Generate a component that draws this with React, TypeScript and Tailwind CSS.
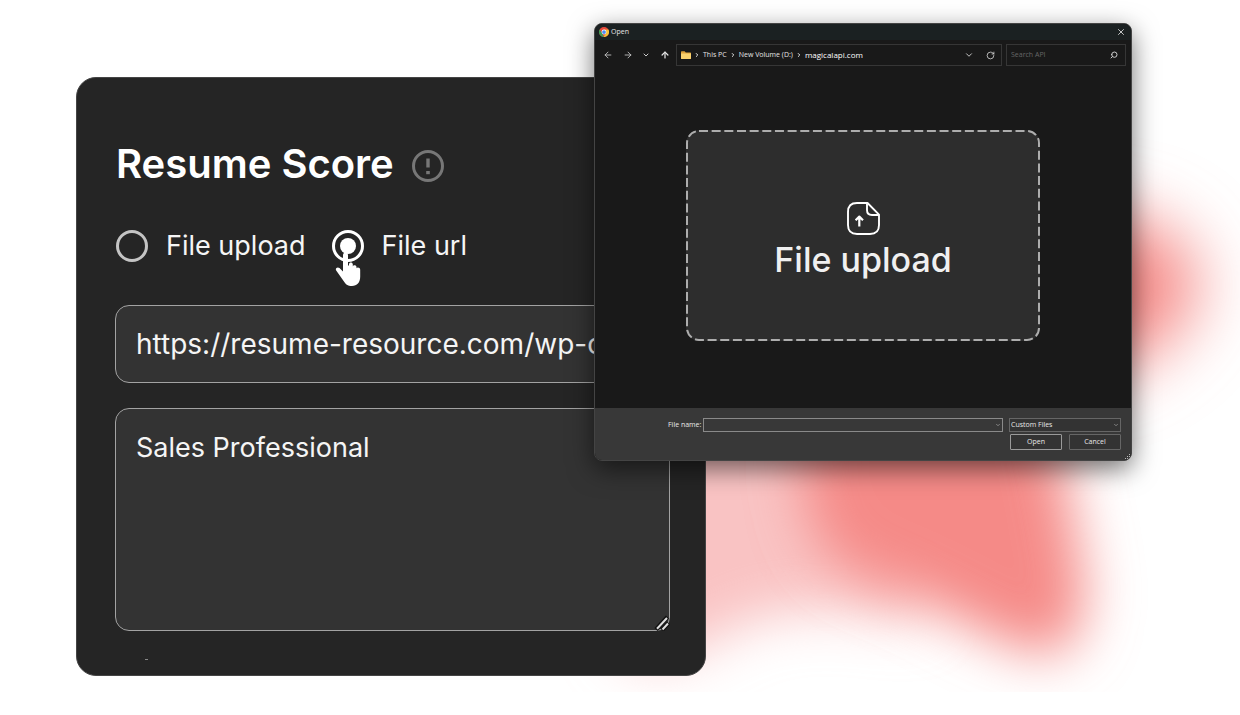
import React, { useState } from 'react';
import { ArrowLeft, ArrowRight, ArrowUp, ChevronDown, ChevronRight, RotateCw, Search, X } from 'lucide-react';

type Source = 'upload' | 'url';

const SOURCES: { id: Source; label: string }[] = [
  { id: 'upload', label: 'File upload' },
  { id: 'url', label: 'File url' },
];

function Backdrop() {
  return (
    <svg
      className="absolute inset-0 w-full h-full"
      viewBox="0 0 1240 715"
      preserveAspectRatio="xMidYMin slice"
      aria-hidden="true"
    >
      <defs>
        <filter id="soft" x="-40%" y="-40%" width="180%" height="180%">
          <feGaussianBlur stdDeviation="27" />
        </filter>
        <filter id="softer" x="-40%" y="-60%" width="180%" height="220%">
          <feGaussianBlur stdDeviation="33" />
        </filter>
        <clipPath id="frame">
          <rect width="1240" height="691" />
        </clipPath>
      </defs>
      <g clipPath="url(#frame)">
        <path d="M560 300H920V622C860 608 810 606 764 616C715 630 690 664 640 660C600 640 570 500 560 300Z" fill="#f9c3c3" filter="url(#soft)" />
        <path d="M800 300H1010C1054 400 1064 470 1076 540C1092 605 1084 662 1034 652C984 638 930 600 866 576C810 556 800 500 804 440Z" fill="#f58a87" filter="url(#soft)" />
        <path d="M930 212H1110C1164 219 1198 250 1198 286C1194 325 1158 350 1110 375H930Z" fill="#f58a87" filter="url(#softer)" />
      </g>
    </svg>
  );
}

function HandPointer() {
  return (
    <svg className="absolute left-[3px] top-[22px] w-[26px] h-[35px] pointer-events-none" viewBox="0 0 26 35" aria-hidden="true">
      <path
        d="M8 3.2C8 1.4 9.2.5 10.5.5S13 1.4 13 3.2V13.5H14V12.3C14 9.8 17.6 9.9 17.8 12.3V14.4C18.2 12.6 21.4 12.8 21.5 15V16.2C22.2 15 25.2 15.3 25.2 17.8V24.5C25.2 30.5 22 34 17 34C12.6 34 10.4 32 8.6 29L1.2 18.6C-.2 16.2 2.5 14.4 4.5 16L8 19.4Z"
        fill="#fff"
      />
    </svg>
  );
}

function ChromeLogo() {
  return (
    <svg className="w-[10px] h-[10px]" viewBox="0 0 24 24" aria-hidden="true">
      <circle cx="12" cy="12" r="12" fill="#e8493c" />
      <path d="M1.6 6L8 15.5 12 24A12 12 0 0 1 1.6 6Z" fill="#3f9d58" />
      <path d="M22.4 6A12 12 0 0 1 11 24L17 14 12 6.5Z" fill="#f5c33b" />
      <circle cx="12" cy="12" r="5.8" fill="#fff" />
      <circle cx="12" cy="12" r="4.5" fill="#4a8af4" />
    </svg>
  );
}

function ResumeCard() {
  const [source, setSource] = useState<Source>('url');
  const [url, setUrl] = useState('https://resume-resource.com/wp-c');
  const [jobTitle, setJobTitle] = useState('Sales Professional');

  return (
    <section className="col-start-1 col-span-2 row-start-1 mt-[54px] rounded-[20px] border border-[#454545] bg-[#252525] pt-[62px] pr-[35px] pl-[38px]">
      <div className="flex items-center gap-[18px] pl-px">
        <h1 className="text-[40px] leading-12 font-semibold text-white">Resume Score</h1>
        <button type="button" aria-label="About resume score" className="mt-1 cursor-pointer">
          <svg className="w-8 h-8" viewBox="0 0 32 32" fill="none" stroke="#777" aria-hidden="true">
            <circle cx="16" cy="16" r="14.5" strokeWidth="3" />
            <path d="M16 8.5V17.5" strokeWidth="3.4" />
            <path d="M16 21V24.2" strokeWidth="3.6" />
          </svg>
        </button>
      </div>

      <div className="mt-[42px] flex gap-[26px] pl-px">
        {SOURCES.map((s) => (
          <label key={s.id} className="relative flex h-8 items-center gap-[18px] text-[27px] text-[#f5f5f5] cursor-pointer">
            <input
              type="radio"
              name="source"
              checked={source === s.id}
              onChange={() => setSource(s.id)}
              className="grid size-8 shrink-0 appearance-none place-items-center rounded-full border-3 border-[#c4c4c4] checked:border-white checked:before:size-4 checked:before:rounded-full checked:before:bg-white checked:before:content-['']"
            />
            {s.label}
            {s.id === 'url' && <HandPointer />}
          </label>
        ))}
      </div>

      <input
        type="text"
        aria-label="File url"
        value={url}
        onChange={(e) => setUrl(e.target.value)}
        className="mt-[43px] block h-[78px] w-full rounded-[14px] border border-[#a3a3a3] bg-[#333] px-5 text-[28px] text-[#f5f5f5] outline-none"
      />

      <div className="relative mt-[25px]">
        <textarea
          aria-label="Job title"
          value={jobTitle}
          onChange={(e) => setJobTitle(e.target.value)}
          className="block h-[223px] w-full resize-none rounded-[14px] border border-[#a3a3a3] bg-[#333] px-5 pt-[19px] text-[27px] leading-10 text-[#f5f5f5] outline-none"
        />
        <svg className="absolute right-0 bottom-0 w-4 h-4" viewBox="0 0 16 16" fill="none" aria-hidden="true">
          <path d="M2 14.5L13.5 2M8 15L14.5 8" stroke="#111" strokeWidth="4.4" />
          <path d="M3 13.8L13 3M8.5 14.5L14 8.5" stroke="#ddd" strokeWidth="2" />
        </svg>
      </div>

      <div className="flex h-11 items-center pt-3 pl-[30px]">
        <span className="h-px w-[3px] bg-[#888]" />
      </div>
    </section>
  );
}

function AddressBar() {
  return (
    <div className="flex items-center gap-1 pt-1 pr-[5px] pl-2 text-[7px] text-[#e4e4e4]">
      <div className="flex w-[69px] shrink-0 items-center justify-between pr-[2px]">
        <button type="button" aria-label="Back"><ArrowLeft className="size-[10px] text-[#ccc]" /></button>
        <button type="button" aria-label="Forward"><ArrowRight className="size-[10px] text-[#ccc]" /></button>
        <button type="button" aria-label="Recent locations"><ChevronDown className="size-2 text-[#ccc]" strokeWidth={3} /></button>
        <button type="button" aria-label="Up one level"><ArrowUp className="size-[10px]" strokeWidth={3} /></button>
      </div>

      <nav aria-label="Location" className="flex h-[22px] flex-1 items-center gap-[3px] border border-[#363636] pr-[6px] pl-1">
        <svg className="w-[10px] h-2" viewBox="0 0 10 8" aria-hidden="true">
          <path d="M0 1Q0 .3.7.3H3.6L4.8 1.4H9.3Q10 1.4 10 2.1V7.2Q10 8 9.3 8H.7Q0 8 0 7.2Z" fill="#e0a43c" />
          <path d="M0 2.6H10V7.2Q10 8 9.3 8H.7Q0 8 0 7.2Z" fill="#fbd26e" />
        </svg>
        <ChevronRight className="size-[6px]" strokeWidth={4} />
        <a href="#this-pc">This PC</a>
        <ChevronRight className="size-[6px]" strokeWidth={4} />
        <a href="#volume">New Volume (D:)</a>
        <ChevronRight className="size-[6px]" strokeWidth={4} />
        <a href="#folder" className="text-[8px] text-white">magicalapi.com</a>
        <button type="button" aria-label="Previous locations" className="ml-auto"><ChevronDown className="size-[10px]" /></button>
        <button type="button" aria-label="Refresh" className="ml-[9px]"><RotateCw className="size-[9px]" /></button>
      </nav>

      <label className="flex h-[22px] w-[120px] items-center border border-[#363636] pr-[7px] pl-1">
        <input type="search" aria-label="Search" placeholder="Search API" className="min-w-0 flex-1 outline-none placeholder:text-[#666]" />
        <Search className="size-2 -scale-x-100 text-[#ccc]" strokeWidth={3} />
      </label>
    </div>
  );
}

function DropZone() {
  return (
    <label className="relative flex h-[211px] w-full flex-col items-center rounded-[14px] bg-[#2d2d2d] pt-[72px] cursor-pointer">
      <svg className="absolute inset-0 w-full h-full" fill="none" aria-hidden="true">
        <rect x="1" y="1" rx="12" className="w-[calc(100%-2px)] h-[calc(100%-2px)]" stroke="#adadad" strokeWidth="2" strokeDasharray="9 3.66" />
      </svg>
      <svg className="w-[33px] h-[33px]" viewBox="0 0 33 33" fill="none" stroke="#fff" strokeWidth="1.9" strokeLinejoin="round" aria-hidden="true">
        <path d="M20.5 1H10Q1 1 1 10V23Q1 32 10 32H23Q32 32 32 23V12.7Z" />
        <path d="M20 1V8Q20 13 25 13H32" />
        <path d="M12.3 24.5V15.5M8.6 18.2L12.3 14.6L16 18.2" strokeWidth="2.2" />
      </svg>
      <span className="mt-[5px] text-[34px] leading-10 font-medium text-[#f0f0f0]">File upload</span>
      <input type="file" className="sr-only" />
    </label>
  );
}

function OpenDialog() {
  const [fileName, setFileName] = useState('');

  return (
    <section
      role="dialog"
      aria-label="Open"
      className="z-10 col-start-2 col-span-2 row-start-1 self-start overflow-hidden rounded-lg border border-[#444] bg-[#191919] shadow-[0_8px_26px_rgba(0,0,0,0.55)] font-['Open_Sans','Noto_Sans',sans-serif]"
    >
      <header className="flex h-4 items-center gap-[2px] bg-[#1b2122] pr-[5px] pl-1 text-[7px] text-[#e4e4e4]">
        <ChromeLogo />
        <h2>Open</h2>
        <button type="button" aria-label="Close" className="ml-auto"><X className="size-[10px]" /></button>
      </header>

      <AddressBar />

      <div className="px-[91px] pt-16 pb-[67px] font-[Inter,sans-serif]">
        <DropZone />
      </div>

      <footer className="relative flex gap-[6px] bg-[#383838] pt-[10px] pr-[10px] pb-[10px] pl-[73px] text-[7px] text-[#e8e8e8]">
        <div className="flex h-[14px] flex-1 items-center gap-[2px]">
          <label htmlFor="file-name">File name:</label>
          <div className="relative flex h-full flex-1">
            <input
              id="file-name"
              type="text"
              value={fileName}
              onChange={(e) => setFileName(e.target.value)}
              className="h-full min-w-0 flex-1 border border-[#8a8a8a] bg-[#383838] px-1 outline-none"
            />
            <ChevronDown className="absolute right-[2px] top-1 size-[6px] text-[#ccc]" />
          </div>
        </div>

        <div className="w-28 space-y-[2px]">
          <div className="relative">
            <select aria-label="File type" className="block h-[14px] w-full appearance-none border border-[#666] bg-[#333] pl-px outline-none">
              <option>Custom Files</option>
            </select>
            <ChevronDown className="absolute right-[2px] top-1 size-[6px] text-[#ccc]" />
          </div>
          <div className="flex gap-[7px] pl-px">
            <button type="button" className="h-4 flex-1 rounded-[1px] border border-[#9a9a9a] bg-[#333]">Open</button>
            <button type="button" className="h-4 flex-1 rounded-[1px] border border-[#666] bg-[#333]">Cancel</button>
          </div>
        </div>

        <svg className="absolute right-0 bottom-0 w-[6px] h-[6px]" viewBox="0 0 6 6" fill="#bbb" aria-hidden="true">
          <path d="M4 0h1v1h-1zM2 2h1v1h-1zM4 2h1v1h-1zM0 4h1v1h-1zM2 4h1v1h-1zM4 4h1v1h-1z" />
        </svg>
      </footer>
    </section>
  );
}

export default function App() {
  return (
    <main className="relative min-h-screen overflow-hidden bg-white font-[Inter,sans-serif]">
      <Backdrop />
      <div className="relative grid grid-cols-[518fr_112fr_426fr] pt-[23px] pr-27 pb-10 pl-19">
        <ResumeCard />
        <OpenDialog />
      </div>
    </main>
  );
}
